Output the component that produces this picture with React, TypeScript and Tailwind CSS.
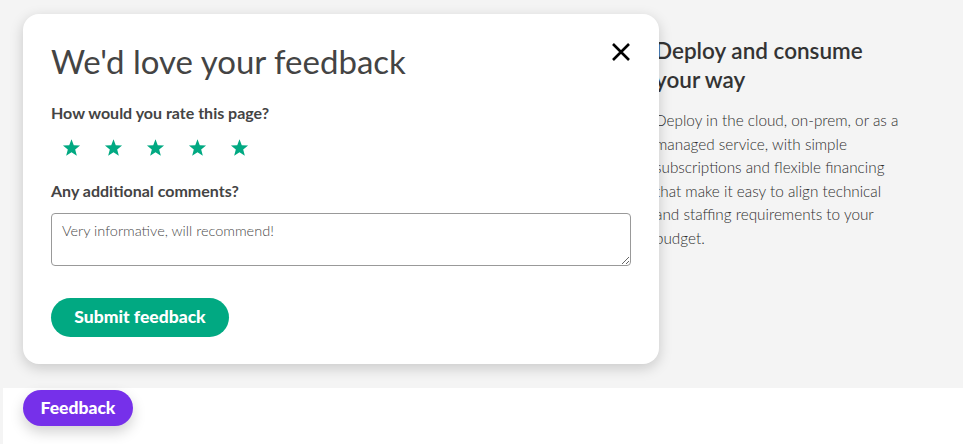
import React, { useState } from "react";

const font = { fontFamily: "Lato, 'Open Sans', sans-serif" };

const Star: React.FC<{ filled: boolean }> = ({ filled }) => (
  <svg viewBox="0 0 24 24" className="w-[21px] h-[21px]">
    <path
      d="M12 2.5l2.6 6.9 7.2.3-5.6 4.6 1.9 7.1L12 17.3l-6.1 4.1 1.9-7.1-5.6-4.6 7.2-.3z"
      fill={filled ? "#01a982" : "none"}
      stroke="#01a982"
      strokeWidth={filled ? 0 : 1.5}
    />
  </svg>
);

const App: React.FC = () => {
  const [rating, setRating] = useState(5);
  const [open, setOpen] = useState(true);

  return (
    <div className="relative w-full h-[444px] bg-white overflow-hidden" style={font}>
      {/* Page section behind the modal */}
      <div className="h-[388px] bg-[#f4f4f4] flex justify-end">
        <div className="w-[308px] pt-[36px] pr-[60px]">
          <h3 className="w-[230px] text-[22.5px] leading-[29px] font-semibold text-[#333]">
            Deploy and consume your way
          </h3>
          <p className="mt-[15px] text-[15.3px] leading-[23.6px] font-light text-[#2e2e2e]">
            Deploy in the cloud, on-prem, or as a managed service, with simple
            subscriptions and flexible financing that make it easy to align
            technical and staffing requirements to your budget.
          </p>
        </div>
      </div>
      <div className="absolute left-0 top-0 bottom-0 w-[3px] bg-[#f4f4f4]" />

      {/* Feedback modal */}
      {open && (
        <div className="absolute left-[23px] top-[14px] w-[636px] h-[350px] bg-white rounded-[16px] shadow-[0_4px_14px_rgba(0,0,0,0.18)] px-[28px] pt-[26px]">
          <button
            onClick={() => setOpen(false)}
            className="absolute right-[28px] top-[28px] w-[20px] h-[20px] flex items-center justify-center"
          >
            <svg viewBox="0 0 20 20" className="w-[20px] h-[20px]">
              <path d="M2 2L18 18M18 2L2 18" stroke="#000" strokeWidth="2.6" />
            </svg>
          </button>
          <h2 className="text-[33px] leading-[42px] font-normal text-[#444]">
            We'd love your feedback
          </h2>
          <p className="mt-[21px] text-[16px] leading-[20px] font-bold text-[#444]">
            How would you rate this page?
          </p>
          <div className="mt-[14px] flex gap-[21px] pl-[10px]">
            {[1, 2, 3, 4, 5].map((n) => (
              <button key={n} onClick={() => setRating(n)}>
                <Star filled={n <= rating} />
              </button>
            ))}
          </div>
          <p className="mt-[23px] text-[16px] leading-[20px] font-bold text-[#444]">
            Any additional comments?
          </p>
          <textarea
            className="mt-[12px] block w-[580px] h-[53px] border border-[#999] rounded-[4px] px-[10px] py-[8px] text-[14.5px] leading-[18px] text-[#4a4a4a] font-light outline-none"
            defaultValue="Very informative, will recommend!"
          />
          <button className="mt-[32px] h-[39px] w-[178px] rounded-full bg-[#01a982] text-white text-[17.5px] font-black">
            Submit feedback
          </button>
        </div>
      )}

      {/* Floating feedback tab */}
      <button
        onClick={() => setOpen(true)}
        className="absolute left-[23px] top-[390px] w-[110px] h-[36px] rounded-full bg-[#7630ea] text-white text-[17.5px] font-black shadow-[0_6px_14px_rgba(0,0,0,0.18)]"
      >
        Feedback
      </button>
    </div>
  );
};

export default App;
